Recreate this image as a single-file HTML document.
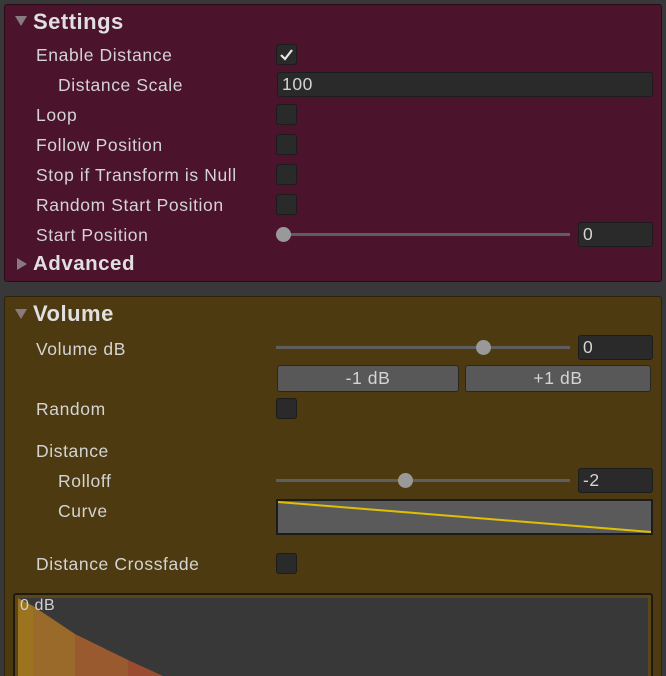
<!DOCTYPE html>
<html style="overflow:hidden;width:666px;height:676px"><head><meta charset="utf-8"><style>
*{box-sizing:border-box;margin:0;padding:0}
body{width:666px;height:676px;background:#383838;overflow:hidden;position:relative;font-family:"Liberation Sans",sans-serif;color:#d4d4d4;font-size:17.5px;letter-spacing:0.6px}
.a{position:absolute}
.p1{left:4px;top:4px;width:658px;height:278px;background:#4b132c;border:1px solid #2a0a18;border-radius:3px}
.p2{left:4px;top:296px;width:658px;height:400px;background:#4d3a10;border:1px solid #2e220a;border-radius:3px}
.h{font-weight:bold;font-size:22px;color:#e0e0e0;letter-spacing:0.5px}
.tri{width:0;height:0;border-left:6px solid transparent;border-right:6px solid transparent;border-top:10px solid #8a7a80}
.trr{width:0;height:0;border-top:6px solid transparent;border-bottom:6px solid transparent;border-left:10px solid #8a7a80}
.l{line-height:20px}
.cb{width:21px;height:21px;background:#2a2a2a;border:1px solid #1c1c1c;border-radius:3px}
.f{background:#2a2a2a;border:1px solid #1c1c1c;border-radius:3px;padding-left:4px;line-height:23px;height:25px}
.tr{height:3px;background:#5e5e5e}
.hd{width:15px;height:15px;border-radius:50%;background:#999}
.b{background:#585858;border:1px solid #262626;border-radius:3px;text-align:center;line-height:24px;height:27px}
</style></head><body>
<div class="a p1"></div>
<div class="a p2"></div>
<div class="a tri" style="left:15px;top:16px"></div>
<div class="a h" style="left:33px;top:9px">Settings</div>
<div class="a l" style="left:36px;top:45px">Enable Distance</div>
<div class="a cb" style="left:276px;top:44px"></div>
<svg class="a" style="left:279px;top:47px" width="15" height="15"><path d="M2 8 L6 12 L13 3" stroke="#e8e8e8" stroke-width="2.2" fill="none"/></svg>
<div class="a l" style="left:58px;top:75px">Distance Scale</div>
<div class="a f" style="left:277px;top:72px;width:376px">100</div>
<div class="a l" style="left:36px;top:105px">Loop</div>
<div class="a cb" style="left:276px;top:104px"></div>
<div class="a l" style="left:36px;top:165px;top:135px">Follow Position</div>
<div class="a cb" style="left:276px;top:134px"></div>
<div class="a l" style="left:36px;top:165px">Stop if Transform is Null</div>
<div class="a cb" style="left:276px;top:164px"></div>
<div class="a l" style="left:36px;top:195px">Random Start Position</div>
<div class="a cb" style="left:276px;top:194px"></div>
<div class="a l" style="left:36px;top:225px">Start Position</div>
<div class="a tr" style="left:276px;top:233px;width:294px"></div>
<div class="a hd" style="left:276px;top:227px"></div>
<div class="a f" style="left:578px;top:222px;width:75px">0</div>
<div class="a trr" style="left:17px;top:258px"></div>
<div class="a h" style="left:33px;top:252px;font-size:20.5px">Advanced</div>

<div class="a tri" style="left:15px;top:309px"></div>
<div class="a h" style="left:33px;top:301px">Volume</div>
<div class="a l" style="left:36px;top:339px">Volume dB</div>
<div class="a tr" style="left:276px;top:346px;width:294px"></div>
<div class="a hd" style="left:476px;top:340px"></div>
<div class="a f" style="left:578px;top:335px;width:75px">0</div>
<div class="a b" style="left:277px;top:365px;width:182px">-1 dB</div>
<div class="a b" style="left:465px;top:365px;width:186px">+1 dB</div>
<div class="a l" style="left:36px;top:399px">Random</div>
<div class="a cb" style="left:276px;top:398px"></div>
<div class="a l" style="left:36px;top:441px">Distance</div>
<div class="a l" style="left:58px;top:471px">Rolloff</div>
<div class="a tr" style="left:276px;top:479px;width:294px"></div>
<div class="a hd" style="left:398px;top:473px"></div>
<div class="a f" style="left:578px;top:468px;width:75px">-2</div>
<div class="a l" style="left:58px;top:501px">Curve</div>
<div class="a" style="left:276px;top:499px;width:377px;height:36px;background:#5a5a5a;border:2px solid #1c1c1c"></div>
<svg class="a" style="left:278px;top:501px" width="373" height="32"><path d="M0 1 L373 31" stroke="#e0c000" stroke-width="2" fill="none"/></svg>
<div class="a l" style="left:36px;top:554px">Distance Crossfade</div>
<div class="a cb" style="left:276px;top:553px"></div>
<div class="a" style="left:13px;top:593px;width:640px;height:90px;background:#5a4616;border:2px solid #1f1a10;border-radius:3px"></div>
<div class="a" style="left:18px;top:598px;width:630px;height:80px;background:#383838"></div>
<svg class="a" style="left:18px;top:598px" width="160" height="78">
<defs><clipPath id="c"><path d="M0 0 L15 8 L57 36 L110 62 L145 78 L0 78Z"/></clipPath></defs>
<g clip-path="url(#c)"><rect x="0" width="15" height="78" fill="#9c7420"/><rect x="15" width="42" height="78" fill="#9a6a2a"/><rect x="57" width="53" height="78" fill="#985a2e"/><rect x="110" width="50" height="78" fill="#9a4c30"/></g></svg>
<div class="a" style="left:20px;top:597px;font-size:16px;color:#d0d0d0">0 dB</div>
</body></html>
